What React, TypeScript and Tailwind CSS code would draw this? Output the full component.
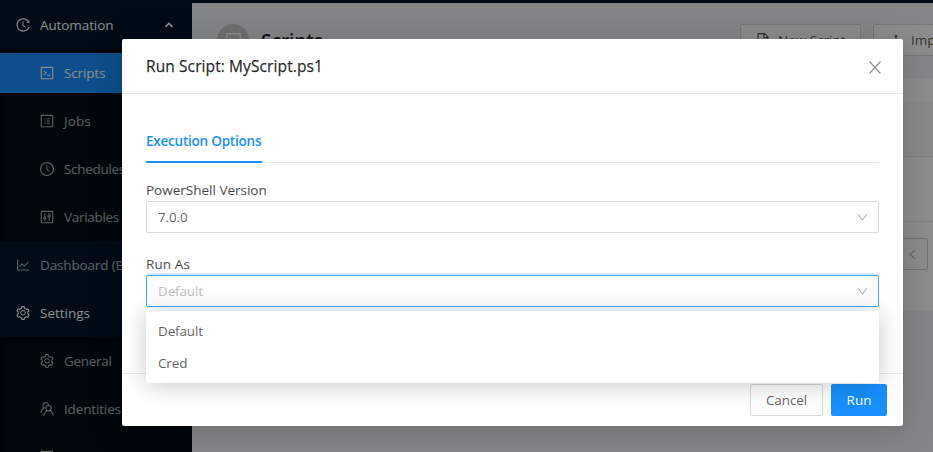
import type { ReactNode } from 'react';
import {
  AiOutlineHistory,
  AiOutlineCode,
  AiOutlineProfile,
  AiOutlineClockCircle,
  AiOutlineControl,
  AiOutlineLineChart,
  AiOutlineSetting,
  AiOutlineFile,
  AiOutlineUpload,
  AiOutlineDown,
  AiOutlineLeft,
} from 'react-icons/ai';

function PeopleIcon() {
  return (
    <svg width="16" height="16" viewBox="0 0 16 16" fill="none" stroke="currentColor" strokeWidth="1.15" strokeLinecap="round">
      <circle cx="9.6" cy="7.2" r="2.7" />
      <path d="M5 14.2C5.3 12.3 6.3 10.9 7.8 9.6M14.2 14.2C13.9 12.3 12.9 10.9 11.4 9.6" />
      <path d="M9.4 3.7A2.8 2.8 0 1 0 5.4 6.9M2 11.4C2.2 9.6 3.2 8 4.9 6.8" />
    </svg>
  );
}

function Item({ icon, label, className = '', track = 'tracking-[-0.15px]' }: { icon: ReactNode; label?: string; className?: string; track?: string }) {
  return (
    <div className={`flex h-10 shrink-0 items-center gap-[10px] whitespace-nowrap text-[13.5px] ${className}`}>
      <span className="flex w-[14px] shrink-0 justify-center text-[16px] *:shrink-0">{icon}</span>
      {label && <span className={track}>{label}</span>}
    </div>
  );
}

function Sidebar() {
  return (
    <aside className="flex h-[452px] w-48 shrink-0 flex-col overflow-hidden bg-[#001529] text-white/65">
      <div className="mt-[5px] flex items-center justify-between pl-4 pr-[18px] text-white">
        <Item icon={<AiOutlineHistory />} label="Automation" track="tracking-[-0.1px]" />
        <svg width="10" height="6" viewBox="0 0 10 6" fill="none" stroke="currentColor" strokeWidth="1.7">
          <path d="M1.5 5 5 1.5 8.5 5" />
        </svg>
      </div>
      <div className="mt-1 flex shrink-0 flex-col gap-2 bg-[#000c17] py-1 shadow-[inset_0_2px_8px_rgba(0,0,0,0.45)]">
        <Item icon={<AiOutlineCode />} label="Scripts" className="bg-[#1890ff] pl-10 text-white" />
        <Item icon={<AiOutlineProfile />} label="Jobs" className="pl-10" track="tracking-[0.1px]" />
        <Item icon={<AiOutlineClockCircle />} label="Schedules" className="pl-10" track="tracking-[-0.3px]" />
        <Item icon={<AiOutlineControl />} label="Variables" className="pl-10" track="tracking-[-0.3px]" />
      </div>
      <Item icon={<AiOutlineLineChart />} label="Dashboard (Beta)" className="mt-1 pl-4" />
      <Item icon={<AiOutlineSetting />} label="Settings" className="mt-2 pl-4 text-white" track="tracking-normal" />
      <div className="mt-1 flex shrink-0 flex-col gap-2 bg-[#000c17] py-1 shadow-[inset_0_2px_8px_rgba(0,0,0,0.45)]">
        <Item icon={<AiOutlineSetting />} label="General" className="pl-10" track="tracking-[-0.3px]" />
        <Item icon={<PeopleIcon />} label="Identities" className="pl-10" />
        <Item icon={<AiOutlineProfile />} className="pl-10" />
      </div>
    </aside>
  );
}

function Content() {
  return (
    <main className="flex flex-1 flex-col overflow-hidden border-t-[3px] border-[#001529] bg-[#f0f2f5] text-black/85">
      <div className="flex h-[75px] shrink-0 items-start pl-[25px] pt-[21px]">
        <span className="flex size-8 items-center justify-center rounded-full bg-[#cccccc] text-[19px] text-white">
          <AiOutlineCode />
        </span>
        <span className="ml-3 pt-px text-[19px] font-semibold leading-8">Scripts</span>
        <div className="ml-auto flex gap-3">
          <button className="flex h-8 w-[121px] items-center gap-[7px] whitespace-nowrap rounded-[2px] border border-[#d9d9d9] bg-white pl-[14px] text-[13.5px] text-black/65">
            <AiOutlineFile className="text-[16px]" />
            New Script
          </button>
          <button className="flex h-8 w-[60px] items-center gap-[7px] overflow-hidden whitespace-nowrap rounded-l-[2px] border border-r-0 border-[#d9d9d9] bg-white pl-[14px] text-[13.5px] text-black/65">
            <AiOutlineUpload className="shrink-0 text-[16px]" />
            Import
          </button>
        </div>
      </div>
      <section className="h-[232px] shrink-0 bg-white">
        <div className="h-6" />
        <div className="h-[55px] border-b border-[#e8e8e8] bg-[#fafafa]" />
        <div className="h-[65px] border-b border-[#e8e8e8]" />
        <div className="mt-4 flex justify-end pr-[5px]">
          <div className="flex size-8 items-center justify-center rounded-[2px] border border-[#d0d0d0] text-[13px] text-black/30">
            <AiOutlineLeft />
          </div>
        </div>
      </section>
    </main>
  );
}

function Select({ value, active }: { value: string; active?: boolean }) {
  return (
    <div
      className={`flex h-8 items-center justify-between rounded-[2px] border pl-[11px] pr-[9.5px] text-[13.5px] ${
        active ? 'border-[#40a9ff] text-[#bfbfbf] shadow-[0_-2px_0_rgba(24,144,255,0.2)]' : 'border-[#d9d9d9] text-black/65'
      }`}
    >
      <span className="tracking-[-0.15px]">{value}</span>
      <AiOutlineDown className="text-[13px] text-black/30" />
    </div>
  );
}

function RunDialog() {
  return (
    <div className="flex h-[387px] w-[781px] flex-col rounded-[2px] bg-white shadow-[0_4px_32px_rgba(0,0,0,0.18)]">
      <header className="flex h-[55px] shrink-0 items-center justify-between border-b border-[#e8e8e8] pl-6 pr-[22px]">
        <h2 className="pt-px text-[15.5px] font-medium tracking-[0.1px] text-black/85 [-webkit-text-stroke:0.25px_currentColor]">
          Run Script: MyScript.ps1
        </h2>
        <svg width="12" height="13" viewBox="0 0 12 13" fill="none" stroke="currentColor" strokeWidth="1.4" className="mt-[2px] text-black/45">
          <path d="M.6.6 11.4 12.4M11.4.6.6 12.4" />
        </svg>
      </header>
      <div className="flex h-[279px] shrink-0 flex-col px-6 pt-6">
        <div className="flex h-[45px] shrink-0 border-b border-[#e8e8e8]">
          <div className="flex h-[45px] w-[116px] items-center whitespace-nowrap border-b-2 border-[#1890ff] pt-[3px] text-[13.5px] font-semibold tracking-[-0.22px] text-[#1890ff]">
            Execution Options
          </div>
        </div>
        <label className="mt-[17px] h-[21px] text-[13.5px] font-medium leading-[21px] text-black/65 [-webkit-text-stroke:0.2px_currentColor]">
          PowerShell Version
        </label>
        <Select value="7.0.0" />
        <label className="mt-5 h-[22px] text-[13.5px] font-medium leading-[22px] tracking-[0.1px] text-black/65 [-webkit-text-stroke:0.2px_currentColor]">
          Run As
        </label>
        <div className="relative">
          <Select value="Default" active />
          <ul className="absolute left-0 top-9 z-10 h-[72px] w-full rounded-[2px] bg-white py-1 text-[13.5px] tracking-[-0.15px] text-black/65 shadow-[0_2px_24px_rgba(0,0,0,0.22)]">
            <li className="h-8 px-3 leading-8">Default</li>
            <li className="h-8 px-3 leading-8">Cred</li>
          </ul>
        </div>
      </div>
      <footer className="flex h-[53px] items-start justify-end gap-2 border-t border-[#e8e8e8] pr-4 pt-[10px] text-[13.5px]">
        <button className="h-8 w-[73px] rounded-[2px] border border-[#d9d9d9] tracking-[-0.1px] text-black/65">Cancel</button>
        <button className="h-8 w-14 rounded-[2px] bg-[#1890ff] text-white">Run</button>
      </footer>
    </div>
  );
}

export default function App() {
  return (
    <div className="relative flex h-[452px] w-[933px] overflow-hidden font-['Open_Sans',sans-serif]">
      <Sidebar />
      <Content />
      <div className="absolute inset-0 flex items-start bg-black/45 pl-[122px] pt-[39px]">
        <RunDialog />
      </div>
    </div>
  );
}
